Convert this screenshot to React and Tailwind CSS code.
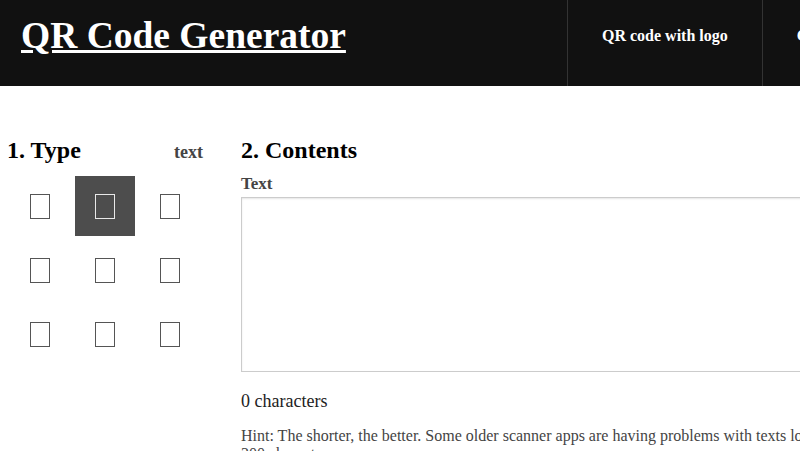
import React from "react";

const serif = { fontFamily: '"Liberation Serif", "Times New Roman", serif' };

const types = [0, 1, 2, 3, 4, 5, 6, 7, 8];

function TypeGrid({ selected }) {
  return (
    <div className="mt-[10px] ml-[3px] grid grid-cols-[60px_60px_60px] grid-rows-[60px_60px_60px] gap-x-[5px] gap-y-[4px]">
      {types.map((t) => (
        <div
          key={t}
          className={`flex items-center justify-center ${t === selected ? "bg-[#4d4d4d]" : ""}`}
        >
          <div
            className={`h-[25px] w-[20px] border ${t === selected ? "border-[#e8e8e8]" : "border-[#555]"}`}
          />
        </div>
      ))}
    </div>
  );
}

export default function App() {
  return (
    <div className="h-screen w-screen overflow-hidden bg-white" style={serif}>
      <div className="w-[1100px]">
        {/* header */}
        <header className="flex h-[86px] bg-[#111111] text-white">
          <div className="w-[567px] shrink-0 pl-[21px] pt-[14px]">
            <a href="#" className="text-[37.5px] font-bold leading-[43px] underline">
              QR Code Generator
            </a>
          </div>
          <nav className="flex">
            <a href="#" className="border-l border-[#333] px-[34px] pt-[27px] text-[16px] font-bold leading-[18px]">
              QR code with logo
            </a>
            <a href="#" className="border-l border-[#333] px-[34px] pt-[27px] text-[16px] font-bold leading-[18px]">
              Contact
            </a>
          </nav>
        </header>

        {/* body */}
        <main className="flex pt-[50px]">
          <section className="w-[241px] shrink-0 pl-[7px]">
            <div className="flex w-[196px] items-baseline justify-between">
              <h2 className="text-[24px] font-bold leading-[28px] text-black">1. Type</h2>
              <span className="text-[18px] font-bold text-[#444]">text</span>
            </div>
            <TypeGrid selected={1} />
          </section>

          <section className="w-[630px] shrink-0">
            <h2 className="text-[24px] font-bold leading-[28px] text-black">2. Contents</h2>
            <label className="mt-[10px] block text-[17px] font-bold leading-[20px] text-[#444]">
              Text
            </label>
            <textarea
              className="mt-[3px] block h-[175px] w-full resize-none border border-[#cccccc] shadow-[inset_0_1px_2px_rgba(0,0,0,0.1)] outline-none"
            />
            <p className="mt-[19px] text-[18px] leading-[21px] text-[#222]">0 characters</p>
            <p className="mt-[15px] text-[16px] leading-[18px] text-[#444]">
              Hint: The shorter, the better. Some older scanner apps are having problems with texts longer than 300 characters.
            </p>
          </section>
        </main>
      </div>
    </div>
  );
}
